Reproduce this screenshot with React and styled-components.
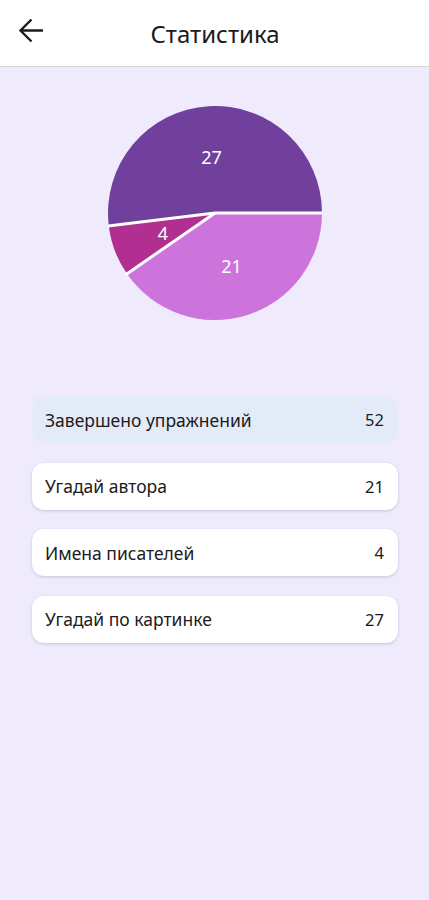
import React from 'react'
import styled, { createGlobalStyle } from 'styled-components'

const stats = [
  { label: 'Угадай автора', value: 21, color: '#cd74dc' },
  { label: 'Имена писателей', value: 4, color: '#b02f90' },
  { label: 'Угадай по картинке', value: 27, color: '#713f9c' },
]

//pie slices drawn counterclockwise from east: 27, then 4, then 21
const slices = [stats[2], stats[1], stats[0]]

const GlobalStyle = createGlobalStyle`
  body {
    margin: 0;
    background: #efebfd;
    font-family: "Noto Sans", Roboto, sans-serif;
  }
`

const Pie = ({ size }) => {
  const r = size / 2
  const total = slices.reduce((s, x) => s + x.value, 0)
  let start = 0
  const parts = slices.map((s) => {
    const sweep = (s.value / total) * Math.PI * 2
    const a0 = start
    start += sweep
    return { ...s, a0, a1: start, sweep }
  })
  const pt = (a, d) => [r + d * Math.cos(a), r - d * Math.sin(a)]

  return (
    <svg width={size} height={size} viewBox={`0 0 ${size} ${size}`}>
      {parts.map((s) => {
        const [x0, y0] = pt(s.a0, r)
        const [x1, y1] = pt(s.a1, r)
        return (
          <path
            key={s.label}
            d={`M${r},${r} L${x0},${y0} A${r},${r} 0 ${s.sweep > Math.PI ? 1 : 0} 0 ${x1},${y1} Z`}
            fill={s.color}
          />
        )
      })}
      {/* white separators between slices */}
      {parts.map((s) => {
        const [x, y] = pt(s.a0, r + 2)
        return <line key={'l' + s.label} x1={r} y1={r} x2={x} y2={y} stroke="#ffffff" strokeWidth="3" />
      })}
      {parts.map((s) => {
        const mid = (s.a0 + s.a1) / 2
        const [lx, ly] = pt(mid, r * 0.52)
        return (
          <PieLabel key={'t' + s.label} x={lx} y={ly}>
            {s.value}
          </PieLabel>
        )
      })}
    </svg>
  )
}

const App = () => {
  const total = stats.reduce((s, x) => s + x.value, 0)

  return (
    <>
      <GlobalStyle />
      <Screen>
        <Header>
          <BackButton aria-label="back">
            <svg width="30" height="30" viewBox="0 0 30 30">
              <path d="M28 12.5H6 M16.5 1.5 L5.5 12.5 L16.5 23.5" fill="none" stroke="#1d1b20" strokeWidth="2.4" />
            </svg>
          </BackButton>
          <Title>Статистика</Title>
        </Header>

        <ChartWrap>
          <Pie size={214} />
        </ChartWrap>

        <List>
          <Card $active>
            <span>Завершено упражнений</span>
            <Value>{total}</Value>
          </Card>
          {stats.map((s) => (
            <Card key={s.label}>
              <span>{s.label}</span>
              <Value>{s.value}</Value>
            </Card>
          ))}
        </List>
      </Screen>
    </>
  )
}

//styles

const Screen = styled.div`
  min-height: 900px;
  background: #efebfd;
  display: flex;
  flex-direction: column;
`

const Header = styled.header`
  height: 66px;
  background: #ffffff;
  border-bottom: 1px solid #d9d7dd;
  display: flex;
  align-items: center;
  justify-content: center;
  position: relative;
`

const BackButton = styled.button`
  position: absolute;
  left: 15px;
  top: 18px;
  width: 30px;
  height: 30px;
  padding: 0;
  border: none;
  background: none;
  display: flex;
`

const Title = styled.h1`
  margin: 0;
  font-size: 24px;
  font-weight: 400;
  color: #1d1b20;
  padding-left: 1px;
`

const ChartWrap = styled.div`
  display: flex;
  justify-content: center;
  padding-top: 39px;
  padding-left: 1px;
`

const PieLabel = styled.text`
  fill: #ffffff;
  font-family: "Noto Sans", Roboto, sans-serif;
  font-size: 18px;
  text-anchor: middle;
  dominant-baseline: central;
`

const List = styled.div`
  display: flex;
  flex-direction: column;
  gap: 19.5px;
  padding: 76px 31px 0 32px;
`

const Card = styled.div`
  height: 47px;
  box-sizing: border-box;
  padding: 0 14px 0 13px;
  border-radius: 12px;
  display: flex;
  align-items: center;
  justify-content: space-between;
  font-size: 17.5px;
  color: #1d1b20;
  background: ${(props) => (props.$active ? '#e3ebf8' : '#ffffff')};
  box-shadow: ${(props) => (props.$active ? 'none' : '0 1px 3px rgba(60, 50, 90, 0.22)')};
`

const Value = styled.span`
  font-size: 16.5px;
`

export default App
